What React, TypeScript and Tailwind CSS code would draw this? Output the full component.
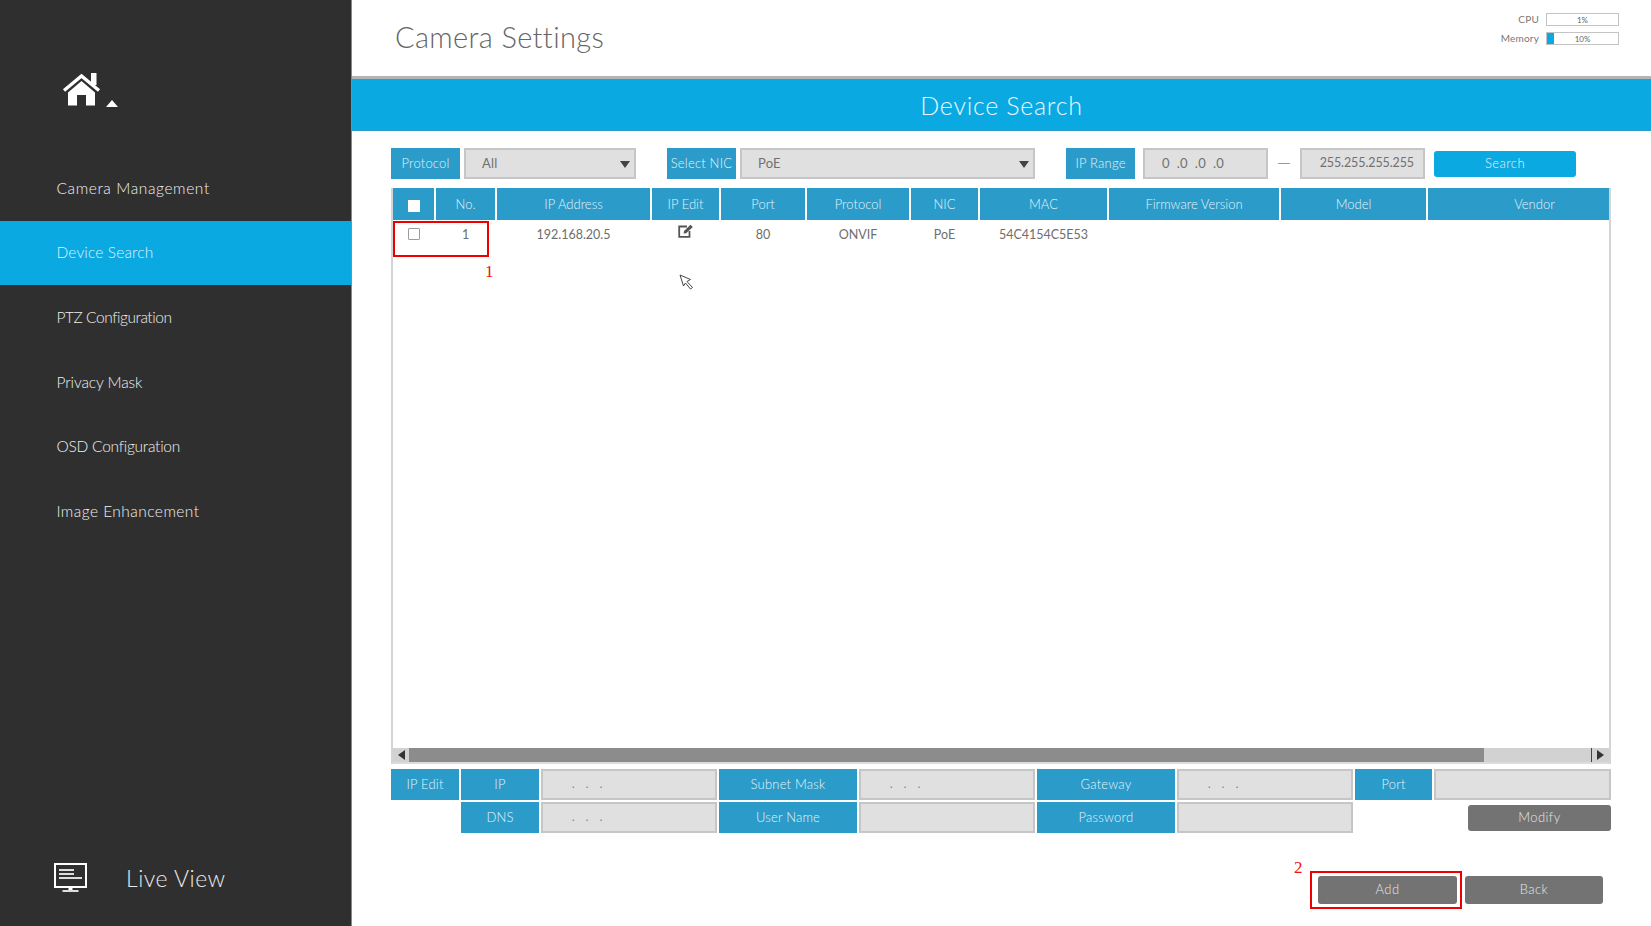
import React from "react";

const font = { fontFamily: '"Lato", "Open Sans", sans-serif' };

const menu = [
  { t: "Camera Management", c: "tracking-[0.6px]" },
  { t: "Device Search", c: "tracking-[0.15px]" },
  { t: "PTZ Configuration", c: "tracking-[-0.45px]" },
  { t: "Privacy Mask", c: "tracking-[-0.1px]" },
  { t: "OSD Configuration", c: "tracking-[-0.25px]" },
  { t: "Image Enhancement", c: "tracking-[0.45px]" },
];
const heads = ["", "No.", "IP Address", "IP Edit", "Port", "Protocol", "NIC", "MAC", "Firmware Version", "Model", "Vendor"];

function Label({ children, className = "" }: { children?: React.ReactNode; className?: string }) {
  return (
    <div className={"flex items-center justify-center bg-[#2b9bc9] font-light " + className}>
      {children}
    </div>
  );
}

function FormLabel({ children, className = "" }: { children?: React.ReactNode; className?: string }) {
  return <Label className={"text-[13px] tracking-[0.2px] text-[#e4f3f9] " + className}>{children}</Label>;
}

function Field({ children, className = "" }: { children?: React.ReactNode; className?: string }) {
  return (
    <div className={"flex items-center border-2 border-[#c6c6c6] bg-[#e0e0e0] text-[13px] tracking-[0.2px] text-[#707070] " + className}>
      {children}
    </div>
  );
}

function Caret() {
  return (
    <svg width="10" height="7" viewBox="0 0 10 7" className="absolute right-[4px] top-[11px]">
      <polygon points="0,0 10,0 5,7" fill="#444" />
    </svg>
  );
}

function Dots({ pad }: { pad: string }) {
  return <span className={"block -mt-[1px] whitespace-pre text-[11px] text-[#777] tracking-[0px] " + pad}>{".    .    ."}</span>;
}

function Meter({ label, value, fill }: { label: string; value: string; fill: number }) {
  return (
    <div className="flex h-[13px] items-center justify-end gap-[7px]">
      <span className="text-[10px] tracking-[0.2px] text-[#777]">{label}</span>
      <div className="relative flex h-[13px] w-[73px] items-center justify-center border border-[#c4c4c4] bg-white text-[8px] text-[#666]">
        <div className="absolute bottom-0 left-0 top-0 bg-[#0aa9e2]" style={{ width: fill }} />
        <span className="relative">{value}</span>
      </div>
    </div>
  );
}

export default function App() {
  return (
    <div className="flex h-[926px] w-[1651px] overflow-hidden bg-white" style={font}>
      <aside className="flex h-full w-[352px] shrink-0 flex-col border-r border-[#8a8a8a] bg-[#2f2f2f]">
        <div className="flex h-[156px] shrink-0 items-start pl-[62px] pt-[73px]">
          <svg width="40" height="33" viewBox="0 0 40 33">
            <path d="M2 17.5 L19.5 3 L37 17.5" fill="none" stroke="#fff" strokeWidth="3.4" />
            <rect x="29" y="0" width="5.5" height="12" fill="#fff" />
            <path d="M6 19.5 L19.5 8 L33 19.5 V32.5 H24 V22 H15 V32.5 H6 Z" fill="#fff" />
          </svg>
          <svg width="12" height="7" viewBox="0 0 12 7" className="ml-[4px] mt-[27px]">
            <polygon points="6,0 12,7 0,7" fill="#fff" />
          </svg>
        </div>
        {menu.map((m, i) => (
          <div
            key={m.t}
            className={
              "flex h-[64.7px] shrink-0 items-center pl-[56.5px] text-[15.5px] font-light " +
              m.c +
              " " +
              (i === 1 ? "bg-[#0aa9e2] text-[#dff3fb]" : "text-[#f0f0f0]")
            }
          >
            {m.t}
          </div>
        ))}
        <div className="mt-auto flex items-center pb-[31px] pl-[54px]">
          <svg width="33" height="29" viewBox="0 0 33 29">
            <rect x="1" y="1" width="31" height="23" fill="none" stroke="#fff" strokeWidth="2" />
            <rect x="5" y="6" width="15" height="2" fill="#ddd" />
            <rect x="5" y="10" width="15" height="2" fill="#ddd" />
            <rect x="5" y="14" width="23" height="2" fill="#ddd" />
            <rect x="14.5" y="24" width="4" height="3" fill="#fff" />
            <rect x="8.5" y="27" width="16" height="2" fill="#ddd" />
          </svg>
          <span className="ml-[39px] text-[23px] font-light tracking-[0.5px] text-[#e8e8e8]">Live View</span>
        </div>
      </aside>

      <main className="flex min-w-0 flex-1 flex-col">
        <header className="flex h-[79px] shrink-0 justify-between border-b-[3px] border-[#b4b4b4] pl-[43px] pr-[32px]">
          <h1 className="pt-[17px] text-[29px] font-light leading-[40px] tracking-[0.35px] text-[#666]">Camera Settings</h1>
          <div className="flex flex-col gap-[6px] pt-[13px]">
            <Meter label="CPU" value="1%" fill={0} />
            <Meter label="Memory" value="10%" fill={7} />
          </div>
        </header>

        <div className="flex h-[52px] shrink-0 items-center justify-center border-b border-[#2b9bc9] bg-[#0aa9e2] pt-[3px] text-[25px] font-light tracking-[0.7px] text-[#e9f7fd]">
          Device Search
        </div>

        <div className="mt-[17px] flex h-[31px] shrink-0 items-stretch pl-[39px]">
          <FormLabel className="w-[69px]">Protocol</FormLabel>
          <Field className="relative ml-[4px] w-[172px] pl-[16px]">All<Caret /></Field>
          <FormLabel className="ml-[31px] w-[69px]">Select NIC</FormLabel>
          <Field className="relative ml-[4px] w-[295px] pl-[16px]">PoE<Caret /></Field>
          <FormLabel className="ml-[31px] w-[69px]">IP Range</FormLabel>
          <Field className="ml-[8px] w-[125px] pl-[17px]">0&nbsp; .0&nbsp; .0&nbsp; .0</Field>
          <div className="flex w-[32px] items-center justify-center">
            <div className="h-px w-[12px] bg-[#9a9a9a]" />
          </div>
          <Field className="w-[125px] justify-end pr-[9px]">
            <span className="text-[12.5px] tracking-[-0.1px]">255.255.255.255</span>
          </Field>
          <div className="ml-[9px] mt-[3px] flex h-[26px] w-[142px] items-center justify-center rounded-[3px] bg-[#0aa9e2] text-[13px] font-light tracking-[0.4px] text-[#e4f3f9]">
            Search
          </div>
        </div>

        <section className="relative ml-[39px] mt-[9px] flex h-[576px] w-[1220px] shrink-0 flex-col border-x-2 border-[#d4d4d4]">
          <div className="grid h-[32px] shrink-0 grid-cols-[41px_59px_153px_67px_84px_102px_67px_127px_170px_145px_181px] gap-x-[2px]">
            {heads.map((h, i) => (
              <Label key={i} className={"text-[13px] tracking-[0px] text-[#e4f3f9] " + (i === 0 ? "pt-[4px] " : "pt-[2px] ") + (i === 10 ? "pl-[32px]" : "")}>
                {i === 0 ? <div className="h-[12px] w-[12px] bg-white" /> : h}
              </Label>
            ))}
          </div>
          <div className="grid h-[30px] shrink-0 grid-cols-[41px_59px_153px_67px_84px_102px_67px_127px_170px_145px_181px] items-center gap-x-[2px] text-center text-[12.5px] tracking-[0px] text-[#6e6e6e]">
            <div className="-mt-[2px] flex justify-center">
              <div className="h-[12px] w-[12px] rounded-[1px] border border-[#9c9c9c] bg-white" />
            </div>
            <div>1</div>
            <div>192.168.20.5</div>
            <div className="flex justify-center">
              <svg width="16" height="14" viewBox="0 0 16 14" className="-mt-[8px]">
                <path d="M9 2.5 H1.2 V12.8 H11.5 V7" fill="none" stroke="#555" strokeWidth="1.8" />
                <path d="M5.5 9.5 L6 7 L12.5 0.8 L14.8 3 L8.2 9.2 Z" fill="#555" />
              </svg>
            </div>
            <div>80</div>
            <div>ONVIF</div>
            <div>PoE</div>
            <div>54C4154C5E53</div>
            <div />
            <div />
            <div />
          </div>
          <div className="flex-1" />
          <div className="flex h-[16px] shrink-0 items-stretch border-b-[2px] border-[#dcdcdc] bg-[#d2d2d2]">
            <div className="flex w-[16px] items-center justify-center bg-[#d2d2d2]">
              <svg width="7" height="10" viewBox="0 0 7 10"><polygon points="7,0 7,10 0,5" fill="#333" /></svg>
            </div>
            <div className="w-[1075px] bg-[#8c8c8c]" />
            <div className="flex-1" />
            <div className="flex w-[18px] items-center justify-center border-l border-[#444]">
              <svg width="7" height="10" viewBox="0 0 7 10"><polygon points="0,0 0,10 7,5" fill="#333" /></svg>
            </div>
          </div>

          <div className="absolute left-[0px] top-[33px] h-[36px] w-[96px] border-2 border-[#ee0000]" />
          <span className="absolute left-[92px] top-[74px] text-[17px] leading-[20px] text-[#ee1111]" style={{ fontFamily: '"Liberation Serif", serif' }}>1</span>
          <svg width="16" height="16" viewBox="0 0 16 16" className="absolute left-[286px] top-[86px]">
            <path d="M1 1 L11.5 5.5 L8 7.5 L13.5 13.5 L11.5 15 L6.5 9 L4.5 12 Z" fill="#fff" stroke="#333" strokeWidth="0.9" />
          </svg>
        </section>

        <div className="ml-[39px] mt-[5px] grid w-[1220px] shrink-0 grid-cols-[68px_78px_176px_138px_176px_138px_176px_77px_177px] grid-rows-[31px_31px] gap-[2px]">
          <FormLabel>IP Edit</FormLabel>
          <FormLabel>IP</FormLabel>
          <Field><Dots pad="pl-[29px]" /></Field>
          <FormLabel>Subnet Mask</FormLabel>
          <Field><Dots pad="pl-[29px]" /></Field>
          <FormLabel>Gateway</FormLabel>
          <Field><Dots pad="pl-[29px]" /></Field>
          <FormLabel>Port</FormLabel>
          <Field />
          <div />
          <FormLabel>DNS</FormLabel>
          <Field><Dots pad="pl-[29px]" /></Field>
          <FormLabel>User Name</FormLabel>
          <Field />
          <FormLabel>Password</FormLabel>
          <Field />
          <div className="col-span-2 flex items-center justify-end">
            <div className="flex h-[26px] w-[143px] items-center justify-center rounded-[3px] bg-[#737373] text-[13px] font-light tracking-[0.4px] text-[#e6e6e6]">
              Modify
            </div>
          </div>
        </div>

        <div className="mt-[43px] flex shrink-0 justify-end gap-[8px] pr-[48px]">
          <div className="relative flex h-[28px] w-[139px] items-center justify-center rounded-[3px] bg-[#737373] text-[13px] font-light tracking-[0.4px] text-[#e6e6e6]">
            Add
            <div className="absolute -bottom-[5px] -left-[8px] -right-[5px] -top-[5px] border-2 border-[#ee0000]" />
            <span className="absolute -left-[24px] -top-[18px] text-[17px] leading-[20px] text-[#ee1111]" style={{ fontFamily: '"Liberation Serif", serif' }}>2</span>
          </div>
          <div className="flex h-[28px] w-[138px] items-center justify-center rounded-[3px] bg-[#737373] text-[13px] font-light tracking-[0.4px] text-[#e6e6e6]">
            Back
          </div>
        </div>
      </main>
    </div>
  );
}
